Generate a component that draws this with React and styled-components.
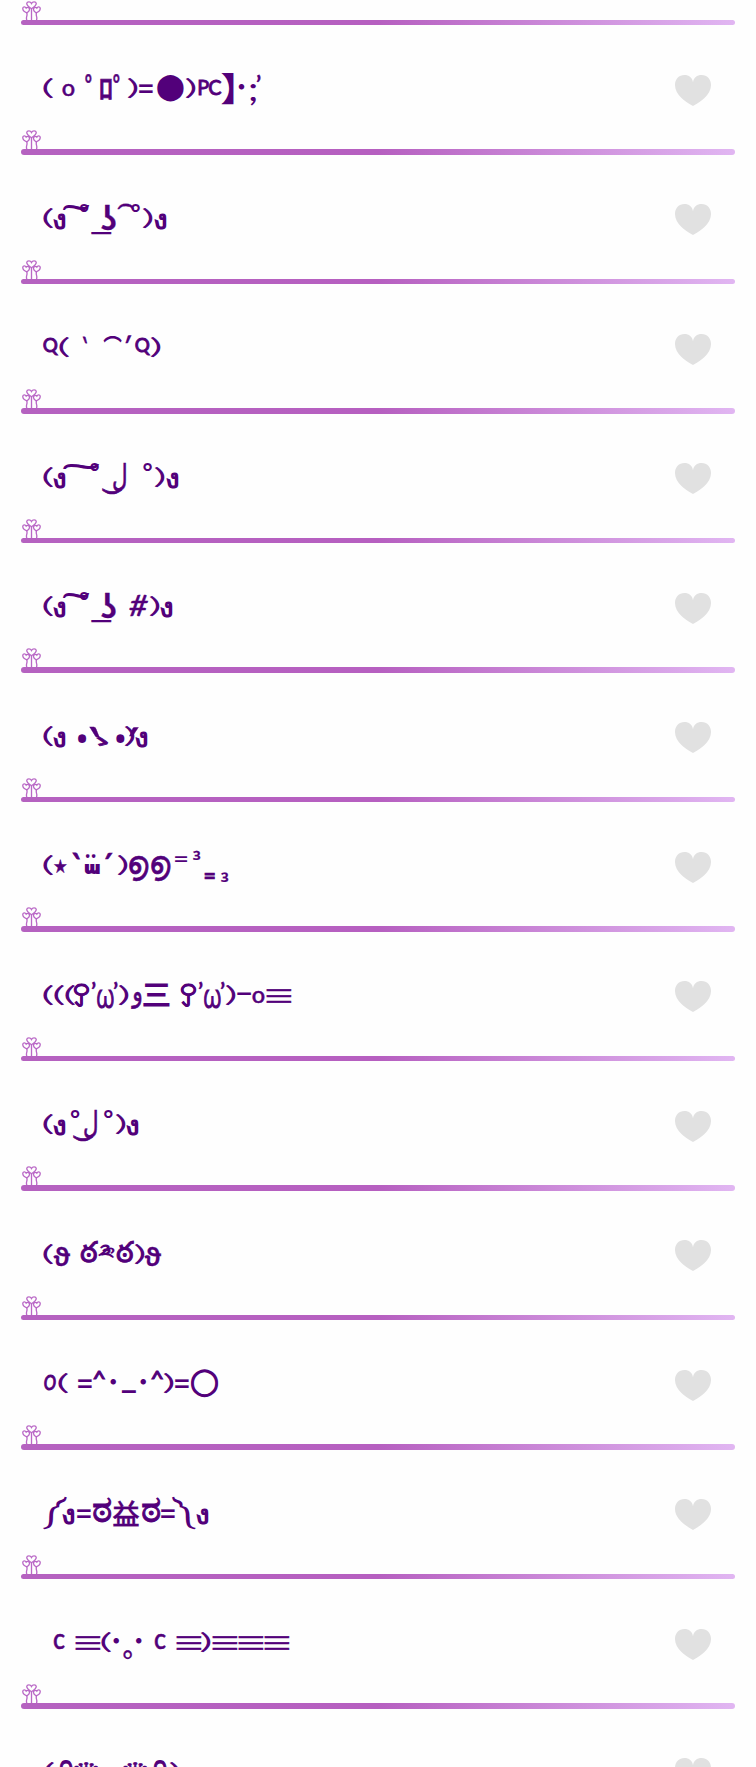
import React from "react";
import styled, { createGlobalStyle } from "styled-components";

const LATIN = `Lato, "Noto Sans", "DejaVu Sans", "Noto Sans CJK JP", sans-serif`;
const SYMBOL = `"Noto Sans", "DejaVu Sans", "Noto Sans CJK JP", sans-serif`;
const CJK = `"Noto Sans CJK JP", "DejaVu Sans", sans-serif`;
const ROUND = `Inter, "Noto Sans", sans-serif`;

// w: cell width, s: font size, x: horizontal stretch, y / d: nudge, b: outline
const glyphs = {
  "(": { w: 9, s: 22, x: 2.2, y: -0.4, d: -0.2, b: 0.6, weight: 300 },
  ")": { w: 9, s: 22, x: 2.2, y: -0.4, d: 0.1, b: 0.6, weight: 300 },
  o: { w: 11.5, s: 23, x: 1.02, y: 0.5, b: 0.5 },
  "=": { w: 13.5, s: 34, x: 0.9, y: 4.5, b: 0.2 },
  P: { w: 10, s: 21, x: 0.94, d: -0.2, b: 0.8 },
  C: { w: 12, s: 21, x: 0.95, d: -0.2, b: 0.8 },
  ";": { w: 5.5, s: 32, x: 1.23, y: 5.5 },
  "’": { w: 4, s: 24, x: 1.18, y: -0.6, b: 0.3 },
  Q: { w: 14, s: 20, x: 0.94, y: -1.8, d: 0.3, b: 0.9 },
  "`": { w: 4, s: 40, x: 0.45, y: 12.6, d: 0.7, b: 0.9 },
  "´": { w: 6, s: 53, x: 0.51, y: 19, d: -1.4, b: 0.3 },
  "#": { w: 19, s: 29, x: 1.12, y: 3, b: 0.4, italic: true },
  ω: { w: 16, s: 33, x: 0.68, y: 6.4, b: 1.2, f: "round", weight: 300 },
  "-": { w: 14, s: 28, x: 1.94, y: 1.2 },
  O: { w: 12, s: 21, x: 0.78, y: 0.3, b: 1, italic: true },
  "^": { w: 11, s: 21, x: 1.14, y: -3.6, b: 0.9 },
  _: { w: 14, s: 43, x: 0.82, y: -3.5 },
  c: { w: 11, s: 29, x: 0.87, y: 0.2, b: 0.5 },
  ﾟ: { w: 5.5, s: 31, x: 0.95, y: 5.5, d: 3.3, b: 0.4, f: "cjk", weight: 500 },
  ﾛ: { w: 11.5, s: 28, x: 1.02, y: 4.1, b: 0.8, f: "cjk", weight: 500 },
  "】": { w: 12, s: 33, x: 1.15, y: 6, d: 12, f: "cjk" },
  "･": { w: 5.5, s: 28, y: 3.2, f: "cjk" },
  "｡": { w: 9, s: 27, x: 0.97, y: 8.3, d: 1.6, b: 0.3, f: "cjk", weight: 500 },
  ゝ: { w: 11, s: 14, x: 1.57, y: 2.9, d: -0.4, b: 0.7, f: "cjk" },
  三: { w: 26, s: 29, x: 1.03, y: 3.9, f: "cjk" },
  益: { w: 27, s: 28, x: 0.98, y: 5.3, b: 0.3, f: "cjk", weight: 500 },
  "≡": { w: 24, s: 26, x: 1.26, y: 3.6, b: 0.6, f: "cjk", weight: 400 },
  "⬤": { w: 27, s: 26, y: 0.4, f: "sym" },
  "◯": { w: 27, s: 26, x: 0.98, y: 0.4, b: 1.3, f: "sym" },
  ง: { w: 12, s: 27, x: 1.12, y: 4.2, f: "sym" },
  " ͠": { w: 27, s: 39, x: 0.86, y: 8.5, d: -4.4, f: "sym", weight: 500 },
  " ͡": { w: 16, s: 28, x: 0.74, y: 3.7, d: -2.7, b: 0.4, f: "sym", weight: 500 },
  " ͟ʖ": { w: 24, s: 32, x: 1.02, y: 4.9, d: -1, b: 0.3, f: "sym" },
  "ل͜": { w: 26, s: 31, x: 0.69, y: 3.1, d: 5.6, b: 0.7, f: "sym", weight: 400 },
  "°": { w: 8, s: 25, x: 1, y: -3, f: "sym" },
  "⌒": { w: 18, s: 21, x: 0.89, y: -0.5, f: "sym" },
  "•": { w: 8.5, s: 31, y: 7.1, f: "sym" },
  "⋆": { w: 12, s: 30, x: 0.86, y: 3.5, b: 0.5, f: "sym" },
  ɯ: { w: 14, s: 15, x: 1.05, y: 0.5, b: 1.9, f: "sym" },
  "¨": { w: 10, s: 33, x: 0.88, y: 5.9, d: -0.2, f: "sym" },
  "൭": { w: 20, s: 31, y: 2.2, d: -1.2, b: 0.7, f: "sym", weight: 500 },
  "⁼": { w: 13, s: 36, x: 1.24, y: 7.9, f: "sym", weight: 400 },
  "³": { w: 7, s: 20, x: 1.09, y: -3.8, b: 0.2, f: "sym" },
  "₌": { w: 10, s: 33, x: 1.03, y: 7.4, b: 0.6, f: "sym" },
  "₃": { w: 7, s: 20, x: 1.09, y: 6.5, b: 0.2, f: "sym" },
  ꎤ: { w: 15, s: 25, x: 0.98, y: 4, b: 0.6, f: "sym" },
  و: { w: 13, s: 30, x: 0.73, y: -0.8, d: 1.3, b: 0.6, f: "sym", weight: 400 },
  ϑ: { w: 15, s: 26, x: 0.96, y: 5, b: 0.3, f: "sym" },
  ఠ: { w: 18, s: 29, x: 1.02, y: 1.4, d: -0.6, b: 0.9, f: "sym", weight: 500 },
  "༬": { w: 17, s: 19, x: 1.3, y: -2.7, f: "sym" },
  "༼": { w: 23, s: 21, x: 1.32, y: -1.3, d: -1.2, f: "sym" },
  "༽": { w: 23, s: 21, x: 1.32, y: -1.3, d: -1.1, f: "sym" },
  ಠ: { w: 19, s: 37, x: 1.04, y: 2.4, b: 0.9, f: "sym", weight: 500 },
  "♛": { w: 23, s: 27, x: 1.25, y: 3, b: 0.5, f: "sym" },
  "໑": { w: 15, s: 32, x: 0.68, y: 0.4, b: 1.2, f: "sym", weight: 500 },
};

// every entry: [glyph, gap before it, overrides]
const kaomojis = [
  [["(", 0], ["o", 10.5], ["ﾟ", 11.5], ["ﾛ", 9], ["ﾟ", 2], [")", 8.5], ["=", 2], ["⬤", 4.3], [")", 3], ["P", 2.5], ["C", 1], ["】", 0.5], ["･", 5], [";", 5.7], ["’", 1]],
  [["(", 0], ["ง", 1.3], [" ͠", -2.8], ["°", -10], [" ͟ʖ", 5], [" ͡", 1], ["°", -2.5], [")", 4], ["ง", 1.5]],
  [["Q", -0.5], ["(", 2], ["`", 14.5], ["⌒", 16.5], ["´", 5], ["Q", 3], [")", 2]],
  [["(", 0], ["ง", 1.3], [" ͠", -2.8, { w: 37, x: 1.18, d: -6 }], ["°", -9.5], ["ل͜", 3], ["°", 16], [")", 3.5], ["ง", 2]],
  [["(", 0], ["ง", 1.3], [" ͠", -2.8], ["°", -10], [" ͟ʖ", 5], ["#", 12.3], [")", 1.7], ["ง", 2]],
  [["(", 0], ["ง", 1.3], ["•", 12], ["`", 3.2, { w: 10.5, s: 67, x: 0.71, y: 33, d: 1.8, b: 0.3 }], ["ゝ", -3.5], ["•", 8.5], [")", 1], ["´", -5, { w: 9.5, s: 60, x: 0.72, y: 28, d: -2.2 }], ["ง", -3]],
  [["(", 0], ["⋆", 1.5], ["`", 6.5, { w: 7, s: 40, x: 0.79, y: 10.6, d: 1.2 }], ["ɯ", 5.8], ["¨", -13.8], ["´", 9.8, { w: 7, s: 40, x: 0.79, y: 10.8, d: -1.6, b: 0.7 }], [")", 5.7], ["൭", 2], ["൭", 2], ["⁼", 3.3], ["³", 6.2], ["₌", 4.5], ["₃", 6]],
  [["(", 0], ["(", 1.7], ["(", 1.8], ["ꎤ", 1], ["’", 2], ["ω", 1], ["’", 0.7], [")", 1.3], ["و", 1.5], ["三", 1.5], ["ꎤ", 12], ["’", 2], ["ω", 1], ["’", 0.7], [")", 1.3], ["-", 2.3], ["o", 2], ["≡", 2.2]],
  [["(", 0], ["ง", 1.3], ["°", 5.2], ["ل͜", -7], ["°", 6.3], [")", 4.2], ["ง", 1.5]],
  [["(", 0], ["ϑ", 1.5], ["ఠ", 11], ["༬", 0], ["ఠ", 1.5], [")", 0.5], ["ϑ", 1.5]],
  [["O", 0], ["(", 2.5], ["=", 11], ["^", 2.5], ["･", 5.5], ["_", 5.5], ["･", 5], ["^", 5.5], [")", 1.5], ["=", 2.5], ["◯", 2]],
  [["༼", 0], ["ง", -4], ["=", 2.5], ["ಠ", 2], ["益", 1], ["ಠ", 1.5], ["=", 1.3], ["༽", -2], ["ง", 0.3]],
  [["c", 9.5], ["≡", 12], ["(", 1.5], ["･", 3], ["｡", 4], ["･", 4], ["c", 12.5], ["≡", 12], [")", 0.5], ["≡", 2.5], ["≡", 2], ["≡", 2]],
  [["(", 0.5], ["໑", 5.5], ["♛", 1.5], ["♛", 25.5], ["໑", 6.5], [")", 2]],
];

const Sprout = () => (
  <SproutIcon viewBox="0 0 20 20">
    <path d="M10 8.2C7.6 6.6 4.7 4.6 5 2.6 5.4.4 8.8.2 10 2.6 11.2.2 14.6.4 15 2.6 15.3 4.6 12.4 6.6 10 8.2Z" />
    <path d="M5.2 12.4C2.7 11.6.9 9.8.8 7.8.8 5.8 3.4 5.5 4.4 7.5 5.6 6 8.3 6.8 7.9 9 7.6 10.5 6.5 11.5 5.2 12.4Z" />
    <path d="M14.8 12.4C17.3 11.6 19.1 9.8 19.2 7.8 19.2 5.8 16.6 5.5 15.6 7.5 14.4 6 11.7 6.8 12.1 9 12.4 10.5 13.5 11.5 14.8 12.4Z" />
    <path d="M10 8.2V20M5 12.4q.6 1.8 0 3.8t0 4M15.3 12.4q-.6 1.8 0 3.8t0 4" />
  </SproutIcon>
);

const Separator = () => (
  <Divider>
    <Sprout />
    <Bar />
  </Divider>
);

const App = () => {
  return (
    <>
      <GlobalStyle />
      <Page>
        <Separator />
        {kaomojis.map((kaomoji, index) => (
          <Item key={index}>
            <Content>
              <Kaomoji>
                {kaomoji.map(([char, gap, over], i) => {
                  const g = { ...glyphs[char], ...over };
                  return (
                    <Cell key={i} $w={g.w} $gap={gap}>
                      <Glyph
                        $font={g.f}
                        $weight={g.weight}
                        $italic={g.italic}
                        $size={g.s}
                        $x={g.x}
                        $y={g.y}
                        $d={g.d}
                        $outline={g.b}
                      >
                        {char}
                      </Glyph>
                    </Cell>
                  );
                })}
              </Kaomoji>
              <LikeButton aria-label="like">
                <svg viewBox="0 0 36 31">
                  <path d="M18 31C10 26.5 0 19.5 0 10 0 4 4 0 9.3 0 14 0 17.5 2.6 18 7.3 18.5 2.6 22 0 26.7 0 32 0 36 4 36 10 36 19.5 26 26.5 18 31Z" />
                </svg>
              </LikeButton>
            </Content>
            <Separator />
          </Item>
        ))}
      </Page>
    </>
  );
};

const GlobalStyle = createGlobalStyle`
  body {
    margin: 0;
    background: #fefefe;
  }
`;
const Page = styled.main`
  width: 756px;
  height: 1767px;
  padding: 0 21px;
  box-sizing: border-box;
  overflow: hidden;
`;
const Divider = styled.div`
  height: 25px;
  display: flex;
  flex-direction: column;
  justify-content: flex-end;
  flex-shrink: 0;
`;
const SproutIcon = styled.svg`
  width: 19px;
  height: 19px;
  margin-left: 1px;
  fill: none;
  stroke: #b968c6;
  stroke-width: 1.4;
`;
const Bar = styled.div`
  height: 5.4px;
  border-radius: 3px;
  background: linear-gradient(90deg, #b562c0 0%, #b65fc0 50%, #e1b6f2 100%);
`;
const Item = styled.div`
  height: 129.5px;
  display: flex;
  flex-direction: column;
`;
const Content = styled.div`
  flex: 1;
  display: flex;
  justify-content: space-between;
  align-items: flex-start;
  padding: 0 24px 0 22.5px;
`;
const Kaomoji = styled.div`
  margin-top: 40px;
  display: flex;
  align-items: baseline;
  direction: ltr;
  color: #52007a;

  /* keeps the baseline the same for every row */
  &::before {
    content: "";
    height: 30px;
    display: inline-block;
  }
`;
const Cell = styled.span`
  width: ${({ $w }) => $w}px;
  margin-left: ${({ $gap }) => $gap}px;
  flex-shrink: 0;
  display: flex;
  justify-content: center;
  align-items: baseline;
  line-height: 0;
`;
const fonts = { cjk: CJK, sym: SYMBOL, round: ROUND };
const Glyph = styled.span`
  white-space: pre;
  font-family: ${({ $font }) => fonts[$font] || LATIN};
  font-size: ${({ $size }) => $size}px;
  font-weight: ${({ $weight, $font }) => $weight || ($font ? 600 : 500)};
  font-style: ${({ $italic }) => ($italic ? "italic" : "normal")};
  -webkit-text-stroke: ${({ $outline = 0 }) => $outline}px currentColor;
  transform-origin: center;
  transform: translate(${({ $d = 0, $y = 0 }) => `${$d}px, ${$y}px`})
    scaleX(${({ $x = 1 }) => $x});
`;
const LikeButton = styled.button`
  width: 36px;
  height: 31px;
  margin-top: 49.5px;
  padding: 0;
  border: none;
  background: none;

  svg {
    display: block;
    width: 36px;
    height: 31px;
    fill: #e1e1e1;
  }
`;

export default App;
